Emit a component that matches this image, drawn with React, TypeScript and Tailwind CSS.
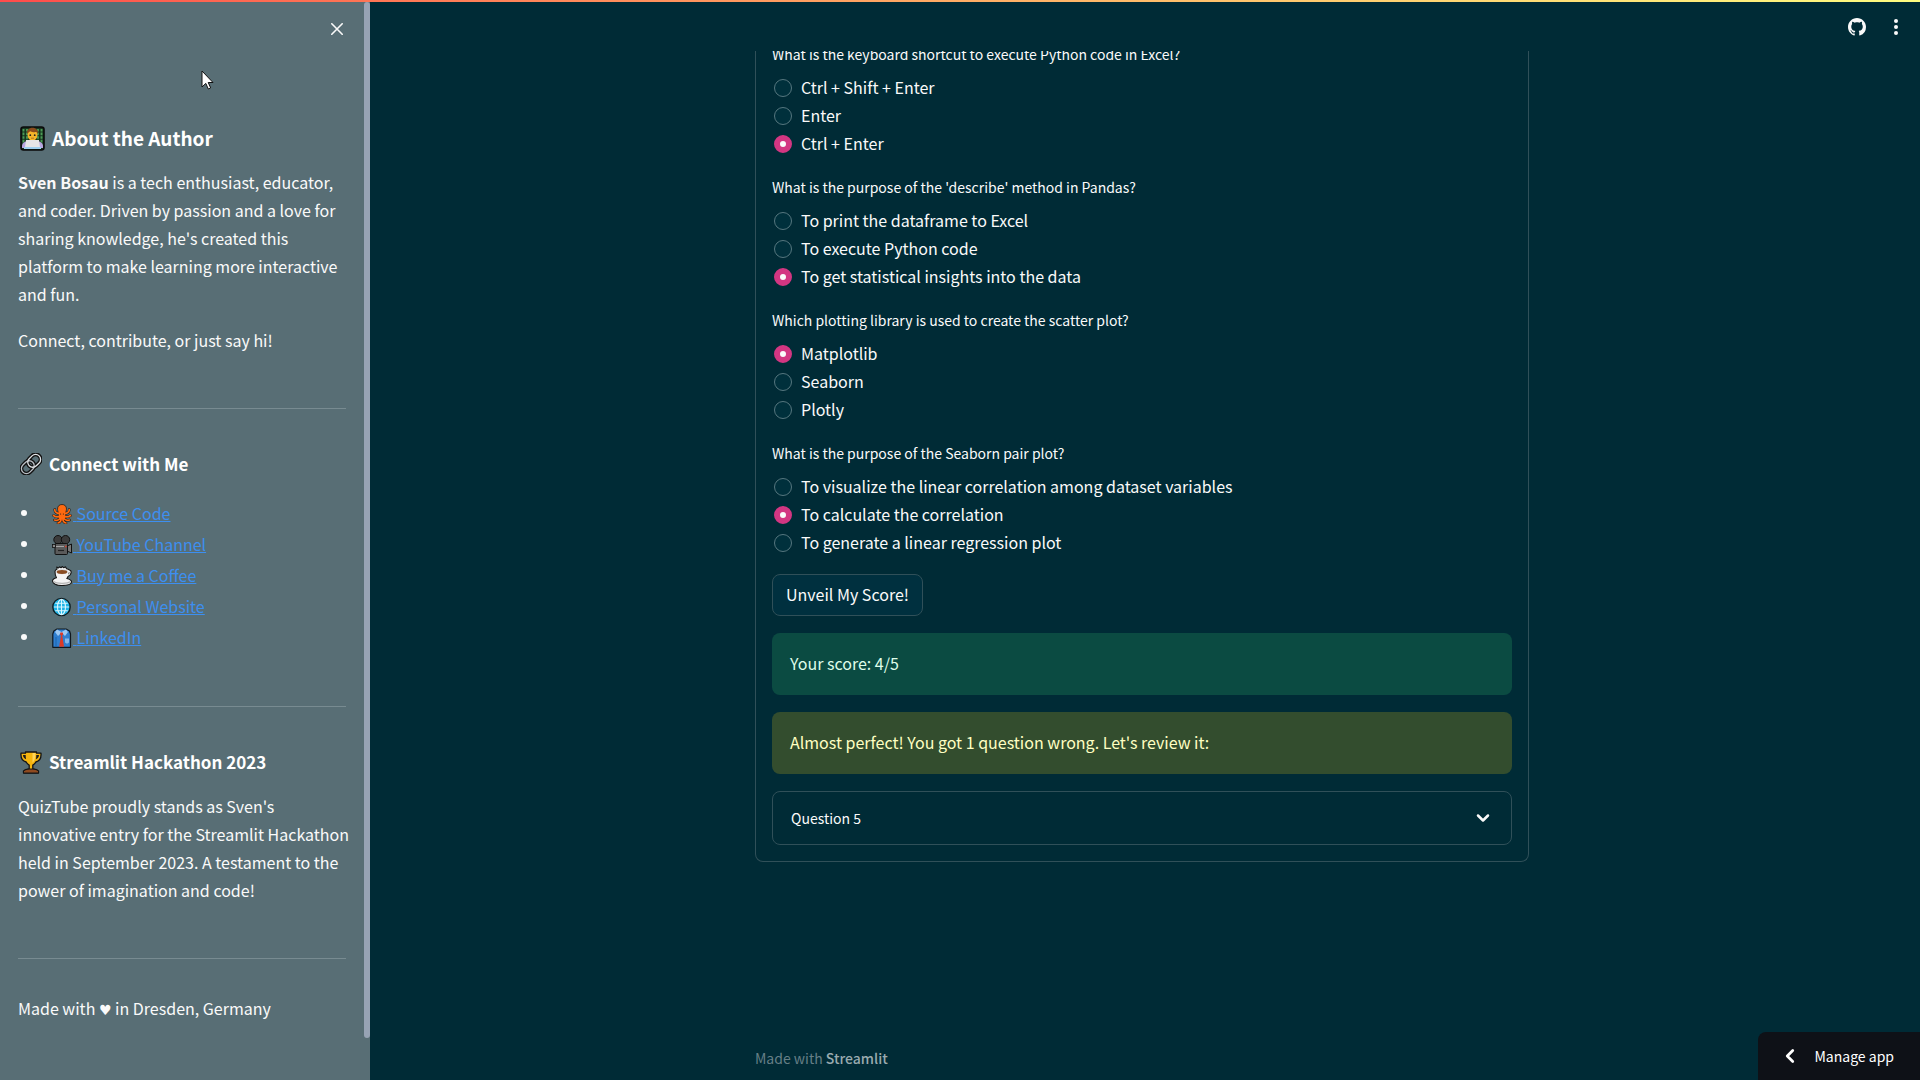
import { useState, type ReactNode } from "react";
import { ChevronDown, ChevronLeft } from "lucide-react";

type Question = { id: string; text: string; options: string[]; picked: number };

const questions: Question[] = [
  {
    id: "q2",
    text: "What is the keyboard shortcut to execute Python code in Excel?",
    options: ["Ctrl + Shift + Enter", "Enter", "Ctrl + Enter"],
    picked: 2,
  },
  {
    id: "q3",
    text: "What is the purpose of the 'describe' method in Pandas?",
    options: ["To print the dataframe to Excel", "To execute Python code", "To get statistical insights into the data"],
    picked: 2,
  },
  {
    id: "q4",
    text: "Which plotting library is used to create the scatter plot?",
    options: ["Matplotlib", "Seaborn", "Plotly"],
    picked: 0,
  },
  {
    id: "q5",
    text: "What is the purpose of the Seaborn pair plot?",
    options: [
      "To visualize the linear correlation among dataset variables",
      "To calculate the correlation",
      "To generate a linear regression plot",
    ],
    picked: 1,
  },
];

function Technologist() {
  return (
    <svg viewBox="0 0 25 25" className="size-[25px] shrink-0" aria-hidden="true">
      <rect x="1" y="1" width="23" height="23" rx="2.5" fill="#16351f" stroke="#0a0a0a" strokeWidth="1.6" />
      <path d="M3.500 3v15M7 3v14M18 3v14M21.500 3v15" stroke="#4c9a55" strokeWidth="1.9" strokeDasharray="2.6 1" />
      <path d="M2 20c0-3 3-4.500 6-5h9c3 .5 6 2 6 5v2H2z" fill="#b9a5e0" />
      <ellipse cx="12.500" cy="9" rx="5" ry="5.800" fill="#f5b52a" />
      <path d="M7 8c-.6-4 2-6.300 5.500-6.300S18.600 4 18 8l-1.500-2c-2 .3-4.500.2-6-.8C9 6 8 6.500 7 8z" fill="#8a4b1c" />
      <circle cx="10.300" cy="9.200" r=".9" fill="#222" />
      <circle cx="14.700" cy="9.200" r=".9" fill="#222" />
      <path d="M11 12.200h3" stroke="#a0641c" strokeWidth=".8" />
      <path d="M6 14h13l1 7.500H5z" fill="#e6e6e6" />
      <path d="M4 21h17v2H4z" fill="#9fd0ee" />
    </svg>
  );
}

function Chain() {
  return (
    <svg viewBox="0 0 22 22" className="size-[22px] shrink-0" aria-hidden="true">
      <g transform="rotate(-45 11 11)" fill="none">
        <rect x="-.5" y="6" width="14" height="10" rx="5" stroke="#111" strokeWidth="4" />
        <rect x="8.500" y="6" width="14" height="10" rx="5" stroke="#111" strokeWidth="4" />
        <rect x="-.5" y="6" width="14" height="10" rx="5" stroke="#b9bec4" strokeWidth="1.300" />
        <rect x="8.500" y="6" width="14" height="10" rx="5" stroke="#e2e5e8" strokeWidth="1.300" />
      </g>
    </svg>
  );
}

function Trophy() {
  return (
    <svg viewBox="0 0 22 23" className="h-[23px] w-[22px] shrink-0" aria-hidden="true">
      <path
        d="M5.500 1h11v1.200H21c.4 5-1.500 8-5.200 8.800-.8 1.700-2 2.700-3 3.200V18c2.500.3 4.700 1 5.700 2v2h-15v-2c1-1 3.200-1.700 5.700-2v-3.800c-1-.5-2.200-1.500-3-3.200C2.500 10.200.6 7.200 1 2.200h4.500z"
        fill="#f5b50f" stroke="#141414" strokeWidth="1.300" strokeLinejoin="round"
      />
      <path d="M3 4h2.700c0 1.600.1 3 .4 4.300C4 7.500 3.100 6 3 4zM19 4h-2.700c0 1.600-.1 3-.4 4.300C18 7.500 18.900 6 19 4z" fill="#1c1c1c" />
      <path d="M12.500 2h3c0 4-.4 7.500-3 10z" fill="#ffd45a" />
      <path d="M3.500 20c2-1.700 5-2 7.500-2s5.500.3 7.500 2v2h-15z" fill="#8e4a20" stroke="#141414" strokeWidth="1" />
    </svg>
  );
}

const linkIcon = "mx-[1px] inline-block size-5 align-[-4px]";

const tentacles =
  "M8.500 9C5 10 2.500 8 2.800 5.500M11.500 9c3.500 1 6-1 5.700-3.500M8.500 11.500c-2 1.800-5 1.500-7 0M11.500 11.500c2 1.800 5 1.500 7 0M8.800 13.500c-1 2.500-4 3.200-6.300 2.500M11.200 13.500c1 2.500 4 3.200 6.300 2.500M9.200 14.500c0 2.500-1.200 4-3.200 4.500M10.800 14.500c0 2.500 1.200 4 3.200 4.500";

function Octopus() {
  return (
    <svg viewBox="0 0 20 20" className={linkIcon} aria-hidden="true">
      <path d={tentacles} fill="none" stroke="#161616" strokeWidth="2.600" strokeLinecap="round" />
      <path d="M5.500 5C5.500 2 7.500.5 10 .5S14.500 2 14.500 5c0 2-1.500 3-.7 10H6.200C7 8 5.500 7 5.500 5z" fill="#ff6a10" stroke="#161616" strokeWidth=".7" />
      <path d={tentacles} fill="none" stroke="#ff6a10" strokeWidth="1.700" strokeLinecap="round" />
      <circle cx="8.600" cy="10" r=".6" fill="#222" />
      <circle cx="11.400" cy="10" r=".6" fill="#222" />
    </svg>
  );
}

function MovieCamera() {
  return (
    <svg viewBox="0 0 20 20" className={linkIcon} aria-hidden="true">
      <circle cx="6" cy="4.700" r="4.200" fill="#3c3c3c" stroke="#111" />
      <circle cx="13.500" cy="4.700" r="4.200" fill="#3c3c3c" stroke="#111" />
      <path d="M15 11l4.500-2v9L15 16z" fill="#777" stroke="#111" />
      <rect x="3" y="8.500" width="12.500" height="11" rx="1" fill="#5b5b5b" stroke="#111" />
      <rect x=".5" y="9.500" width="3" height="3" fill="#888" stroke="#111" strokeWidth=".8" />
      <path d="M4 11.500h8" stroke="#a5a5a5" />
      <path d="M13 11.500h1.500" stroke="#e0402c" strokeWidth="1.400" />
      <path d="M6 15.500h6" stroke="#222" strokeWidth="1.200" />
    </svg>
  );
}

function Coffee() {
  return (
    <svg viewBox="0 0 20 20" className={linkIcon} aria-hidden="true">
      <path
        d="M3 5.500c0-1.500 1-2 2-2.300L4.700 1l1.800 1L7.500.8l1.500 1L10.300.5l1.500 1.300L13.500.8l1 2c1.300.2 2.500.7 3 1.200 2.500.5 2.200 5-1.500 6.500-.3.800-.7 1.400-1.200 2 2.700.7 4.700 1.700 4.700 3.200 0 2.500-4.500 3.800-9.700 3.800S.5 17.500.5 15c0-1.500 1.500-2.500 4-3.200C3.300 10 3 7.500 3 5.500z"
        fill="#f4f4f4" stroke="#161616" strokeWidth="1.100" strokeLinejoin="round"
      />
      <path d="M2 15.500c2 2.300 13.500 2.500 16 .3" fill="none" stroke="#b5b5b5" strokeWidth="1.200" />
      <ellipse cx="10" cy="5.800" rx="6" ry="2.500" fill="#cfcfcf" />
      <ellipse cx="10" cy="6" rx="5.200" ry="1.900" fill="#8a4c22" />
      <path d="M17 5.800c1 .7.3 2.200-.8 2.800z" fill="#333" />
    </svg>
  );
}

function Globe() {
  return (
    <svg viewBox="0 0 20 20" className={linkIcon} aria-hidden="true">
      <circle cx="9.500" cy="10" r="8.700" fill="#1cb3e6" stroke="#0f1a1f" strokeWidth="1.300" />
      <g fill="none" stroke="#d9f6ff" strokeWidth="1.100">
        <ellipse cx="9.500" cy="10" rx="4" ry="7.600" />
        <path d="M9.500 2.400v15.200M2 10h15M3.200 6.200h12.600M3.200 13.800h12.600" />
      </g>
    </svg>
  );
}

function Necktie() {
  return (
    <svg viewBox="0 0 20 20" className={linkIcon} aria-hidden="true">
      <path d="M5 1h9l3.500 2 1 3v13.300H.8V6l1-3z" fill="#2f7fd0" stroke="#10181f" strokeWidth="1.200" strokeLinejoin="round" />
      <path d="M5 1.600L9.500 4 14 1.600 16 4l-3 4-3.500-3.500L6 8 3 4z" fill="#9cc8f2" />
      <path d="M8.300 4.500h2.500l.4 2-1 1 1.800 11.200H7.200L9 7.500l-1-1z" fill="#dd3a26" />
      <path d="M13 10.500h4v4l-2 1.200-2-1.200z" fill="#85b8ea" />
      <path d="M4 9v10" stroke="#1e64ab" />
    </svg>
  );
}

const links: { label: string; icon: ReactNode }[] = [
  { label: "Source Code", icon: <Octopus /> },
  { label: "YouTube Channel", icon: <MovieCamera /> },
  { label: "Buy me a Coffee", icon: <Coffee /> },
  { label: "Personal Website", icon: <Globe /> },
  { label: "LinkedIn", icon: <Necktie /> },
];

function Rule() {
  return <hr className="mr-[6px] border-[#788b91]" />;
}

function Sidebar() {
  return (
    <aside className="relative flex w-[370px] shrink-0 bg-[#586e75]">
      <div className="min-w-0 flex-1 pr-3 pl-[18px] text-base leading-7 text-[#fafafa]">
        <div className="flex h-[122px] justify-end pt-[15px] pr-[3px]">
          <button type="button" aria-label="Close sidebar" className="flex size-6 items-center justify-center self-start">
            <svg viewBox="0 0 12 12" className="size-3" fill="none" stroke="#fafafa" strokeWidth="1.600" strokeLinecap="round">
              <path d="M.8.8l10.400 10.400M11.200.8L.8 11.200" />
            </svg>
          </button>
        </div>
        <h1 className="flex h-7 items-center gap-[7px] pl-[2px] text-[19px] font-bold text-white">
          <Technologist />
          About the Author
        </h1>
        <p className="mt-4">
          <strong className="font-bold">Sven Bosau</strong> is a tech enthusiast, educator, and coder. Driven by passion
          and a love for sharing knowledge, he's created this platform to make learning more interactive and fun.
        </p>
        <p className="mt-[18px] mb-[54px]">Connect, contribute, or just say hi!</p>
        <Rule />
        <h2 className="mt-[41px] flex h-7 items-center gap-[7px] pl-[2px] text-[17px] font-bold text-white">
          <Chain />
          Connect with Me
        </h2>
        <ul className="mt-[19px] mb-[54px]">
          {links.map((l) => (
            <li key={l.label} className="flex h-[31px] items-center">
              <span className="ml-[3px] size-[6px] rounded-full bg-[#fafafa]" />
              <a href="#" className="ml-6 text-[#3d8ff0] underline">
                {l.icon}&nbsp;{l.label}
              </a>
            </li>
          ))}
        </ul>
        <Rule />
        <h2 className="mt-[41px] flex h-7 items-center gap-[7px] pl-[2px] text-[17px] font-bold text-white">
          <Trophy />
          Streamlit Hackathon 2023
        </h2>
        <p className="mt-4 mb-[54px]">
          QuizTube proudly stands as Sven's innovative entry for the Streamlit Hackathon held in September 2023. A
          testament to the power of imagination and code!
        </p>
        <Rule />
        <p className="mt-[35px]">
          Made with <span className="font-['DejaVu_Sans',sans-serif] text-sm">♥</span> in Dresden, Germany
        </p>
      </div>
      <div className="w-[6px] pb-[42px]">
        <div className="h-full rounded-[3px] bg-[#97a3b4]" />
      </div>
      <svg viewBox="0 0 13 20" className="absolute top-[68px] left-[201px] h-5 w-[13px]" aria-hidden="true">
        <path d="M1 1v16l3.800-3.600L7.300 19l2.400-1.100-2.500-5.400H12z" fill="#fff" stroke="#111" strokeLinejoin="round" />
      </svg>
    </aside>
  );
}

function QuestionGroup({ q }: { q: Question }) {
  const [picked, setPicked] = useState(q.picked);
  return (
    <fieldset>
      <legend className="mb-2 h-6 text-sm leading-6">{q.text}</legend>
      {q.options.map((o, i) => (
        <label key={o} className="flex h-7 w-fit items-center pl-[2px] text-base">
          <input
            type="radio"
            name={q.id}
            checked={picked === i}
            onChange={() => setPicked(i)}
            className="mr-[9px] size-[18px] shrink-0 appearance-none rounded-full border border-[#56777f] bg-[#00303c] checked:border-[6px] checked:border-[#d33682] checked:bg-[#fafafa]"
          />
          <span className="pb-[2px]">{o}</span>
        </label>
      ))}
    </fieldset>
  );
}

function Header() {
  return (
    <header className="flex h-[49px] shrink-0 items-center justify-end gap-6 pr-[18px]">
      <a href="#" aria-label="View source on GitHub" className="text-[#fafafa]">
        <svg viewBox="0 0 16 16" className="size-[18px]" fill="currentColor">
          <path d="M8 0C3.580 0 0 3.580 0 8c0 3.540 2.290 6.530 5.470 7.590.4.070.55-.17.55-.38 0-.19-.01-.82-.01-1.490-2.010.37-2.530-.49-2.690-.94-.09-.23-.48-.94-.82-1.130-.28-.15-.68-.52-.01-.53.63-.01 1.080.58 1.230.82.72 1.210 1.870.87 2.330.66.07-.52.28-.87.51-1.070-1.780-.2-3.640-.89-3.640-3.950 0-.87.31-1.590.82-2.150-.08-.2-.36-1.020.08-2.120 0 0 .67-.21 2.200.82.64-.18 1.320-.27 2-.27s1.360.09 2 .27c1.530-1.040 2.200-.82 2.200-.82.44 1.100.16 1.920.08 2.120.51.56.82 1.270.82 2.150 0 3.070-1.870 3.750-3.650 3.950.29.25.54.73.54 1.480 0 1.070-.01 1.930-.01 2.200 0 .21.15.46.55.38A8.010 8.010 0 0 0 16 8c0-4.420-3.580-8-8-8z" />
        </svg>
      </a>
      <button type="button" aria-label="Main menu" className="flex h-[18px] w-3 flex-col items-center justify-between py-[1px]">
        <span className="size-1 rounded-full bg-[#fafafa]" />
        <span className="size-1 rounded-full bg-[#fafafa]" />
        <span className="size-1 rounded-full bg-[#fafafa]" />
      </button>
    </header>
  );
}

export default function App() {
  return (
    <div className="relative flex h-screen flex-col overflow-hidden bg-[#002b36] font-['Noto_Sans_CJK_SC','Noto_Sans',sans-serif] text-[#fafafa]">
      <div className="h-[2px] shrink-0 bg-linear-to-r from-[#ff4b4b] to-[#fffd80]" />
      <div className="flex min-h-0 flex-1">
        <Sidebar />
        <div className="flex min-w-0 flex-1 flex-col">
          <Header />
          <main className="flex min-h-0 flex-1 flex-col overflow-hidden pr-[6px]">
            <div className="mx-auto flex w-full max-w-[774px] flex-1 flex-col">
              <form
                className="rounded-b-lg border border-t-0 border-[#305059] px-4 pb-4"
                onSubmit={(e) => e.preventDefault()}
              >
                <div className="-mt-[9px] flex flex-col gap-[17px]">
                  {questions.map((q) => (
                    <QuestionGroup key={q.id} q={q} />
                  ))}
                  <button
                    type="submit"
                    className="flex h-[42px] items-center self-start rounded-lg border border-[#305059] bg-[#00303f] px-[13px] pb-[2px] text-base"
                  >
                    Unveil My Score!
                  </button>
                  <div role="alert" className="flex h-[62px] items-center rounded-lg bg-[#0b4b42] px-[18px] pb-[2px] text-base text-[#dffde9]">
                    Your score: 4/5
                  </div>
                  <div role="alert" className="flex h-[62px] items-center rounded-lg bg-[#334d2e] px-[18px] pb-[2px] text-base text-[#ffffc2]">
                    Almost perfect! You got 1 question wrong. Let's review it:
                  </div>
                  <button
                    type="button"
                    aria-expanded="false"
                    className="flex h-[54px] items-center justify-between rounded-lg border border-[#305059] px-[18px] text-sm"
                  >
                    Question 5
                    <ChevronDown className="size-5" strokeWidth={3} />
                  </button>
                </div>
              </form>
              <footer className="mt-auto pb-[10px] text-sm leading-6 text-[#667f86]">
                Made with{" "}
                <a href="#" className="font-medium text-[#99aaaf]">
                  Streamlit
                </a>
              </footer>
            </div>
          </main>
        </div>
      </div>
      <button
        type="button"
        className="absolute right-0 bottom-0 flex h-12 items-center gap-[14px] rounded-tl-lg bg-[#0e1117] pr-[26px] pl-[21px] text-sm text-white"
      >
        <ChevronLeft className="size-[22px]" strokeWidth={3} />
        Manage app
      </button>
    </div>
  );
}
